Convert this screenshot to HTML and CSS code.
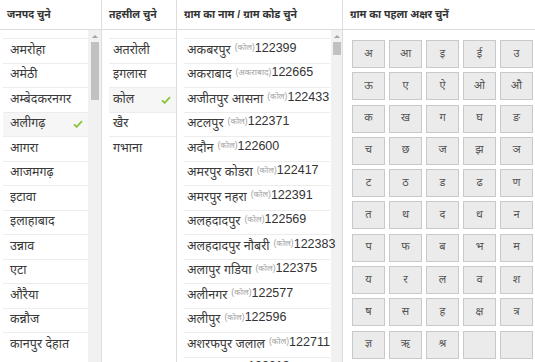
FILE: index.html
```html
<!DOCTYPE html>
<html lang="hi">
<head>
<meta charset="utf-8">
<title>ग्राम चयन</title>
<link rel="stylesheet" href="styles.css">
</head>
<body>
<div class="app">
  <section class="col col-district">
    <div class="hd">जनपद चुने</div>
    <div class="bd">
      <ul class="list">
        <li>अमरोहा</li>
        <li>अमेठी</li>
        <li>अम्बेदकरनगर</li>
        <li class="sel">अलीगढ़<svg class="chk" viewBox="0 0 12 10"><path d="M1 5.5 L4.3 8.5 L11 1.5" /></svg></li>
        <li>आगरा</li>
        <li>आजमगढ़</li>
        <li>इटावा</li>
        <li>इलाहाबाद</li>
        <li>उन्नाव</li>
        <li>एटा</li>
        <li>औरैया</li>
        <li>कन्नौज</li>
        <li>कानपुर देहात</li>
      </ul>
      <div class="sbar"><div class="arr"></div><div class="thumb thumb-long"></div></div>
    </div>
  </section>
  <section class="col col-tehsil">
    <div class="hd">तहसील चुने</div>
    <div class="bd">
      <ul class="list">
        <li>अतरोली</li>
        <li>इगलास</li>
        <li class="sel">कोल<svg class="chk" viewBox="0 0 12 10"><path d="M1 5.5 L4.3 8.5 L11 1.5" /></svg></li>
        <li>खैर</li>
        <li>गभाना</li>
      </ul>
    </div>
  </section>
  <section class="col col-village">
    <div class="hd">ग्राम का नाम / ग्राम कोड चुने</div>
    <div class="bd">
      <ul class="list">
        <li>अकबरपुर <small>(कोल)</small><span class="code">122399</span></li>
        <li>अकराबाद <small>(अकराबाद)</small><span class="code">122665</span></li>
        <li>अजीतपुर आसना <small>(कोल)</small><span class="code">122433</span></li>
        <li>अटलपुर <small>(कोल)</small><span class="code">122371</span></li>
        <li>अदौन <small>(कोल)</small><span class="code">122600</span></li>
        <li>अमरपुर कोडरा <small>(कोल)</small><span class="code">122417</span></li>
        <li>अमरपुर नहरा <small>(कोल)</small><span class="code">122391</span></li>
        <li>अलहदादपुर <small>(कोल)</small><span class="code">122569</span></li>
        <li>अलहदादपुर नौबरी <small>(कोल)</small><span class="code">122383</span></li>
        <li>अलापुर गडिया <small>(कोल)</small><span class="code">122375</span></li>
        <li>अलीनगर <small>(कोल)</small><span class="code">122577</span></li>
        <li>अलीपुर <small>(कोल)</small><span class="code">122596</span></li>
        <li>अशरफपुर जलाल <small>(कोल)</small><span class="code">122711</span></li>
        <li>असदपुर <small>(कोल)</small><span class="code">122613</span></li>
      </ul>
      <div class="sbar"><div class="arr"></div><div class="thumb thumb-short"></div></div>
    </div>
  </section>
  <section class="col col-letters">
    <div class="hd">ग्राम का पहला अक्षर चुनें</div>
    <div class="grid">
      <button>अ</button><button>आ</button><button>इ</button><button>ई</button><button>उ</button>
      <button>ऊ</button><button>ए</button><button>ऐ</button><button>ओ</button><button>औ</button>
      <button>क</button><button>ख</button><button>ग</button><button>घ</button><button>ङ</button>
      <button>च</button><button>छ</button><button>ज</button><button>झ</button><button>ञ</button>
      <button>ट</button><button>ठ</button><button>ड</button><button>ढ</button><button>ण</button>
      <button>त</button><button>थ</button><button>द</button><button>ध</button><button>न</button>
      <button>प</button><button>फ</button><button>ब</button><button>भ</button><button>म</button>
      <button>य</button><button>र</button><button>ल</button><button>व</button><button>श</button>
      <button>ष</button><button>स</button><button>ह</button><button>क्ष</button><button>त्र</button>
      <button>ज्ञ</button><button>ऋ</button><button>श्र</button><button></button><button></button>
    </div>
  </section>
</div>
</body>
</html>
```
FILE: styles.css
```css
html, body {
  margin: 0;
  padding: 0;
  background: #fff;
}
body {
  width: 535px;
  height: 362px;
  overflow: hidden;
  font-family: "Liberation Sans", "Noto Sans Devanagari", "Lohit Devanagari", "Mangal", "Noto Sans", sans-serif;
  color: #333;
}
.app {
  display: grid;
  grid-template-columns: 102px 75px 166px 192px;
  height: 362px;
}
.col {
  display: flex;
  flex-direction: column;
  min-width: 0;
  overflow: hidden;
  border-right: 1px solid #dedede;
}
.col-letters {
  border-right: 0;
}
.hd {
  height: 29px;
  flex: none;
  border-bottom: 1px solid #dcdcdc;
  display: flex;
  align-items: center;
  padding-left: 7px;
  font-size: 10.5px;
  font-weight: bold;
  color: #333;
  white-space: nowrap;
  background: #fff;
}
.bd {
  flex: 1;
  display: flex;
  min-height: 0;
}
.list {
  list-style: none;
  margin: 0;
  padding: 8px 0 0 0;
  flex: 1;
  min-width: 0;
}
.list li {
  height: 23.5px;
  border-top: 1px solid #ececec;
  display: flex;
  align-items: center;
  padding-left: 6px;
  font-size: 12.5px;
  white-space: nowrap;
  color: #3a3a3a;
}
.list li.sel {
  background: #f6f6f6;
}
.chk {
  width: 10px;
  height: 8px;
  margin-left: auto;
  margin-right: 5px;
  fill: none;
  stroke: #8cc63e;
  stroke-width: 2.4;
}
.col-district .list {
  margin-left: 3px;
}
.col-district .list li {
  padding-left: 7px;
}
.col-tehsil .list {
  margin-left: 7px;
}
.col-tehsil .list li {
  padding-left: 4px;
}
.col-village .list {
  margin-left: 7px;
}
.col-village .list li {
  padding-left: 3px;
}
.list small {
  font-size: 8.5px;
  color: #a0a0a0;
  margin-left: 4px;
  position: relative;
  top: -3px;
}
.code {
  font-family: "Liberation Sans", sans-serif;
  font-size: 12.5px;
  color: #333;
  position: relative;
  top: -3px;
}
.sbar {
  flex: none;
  width: 13px;
  background: #f1f1f1;
  display: flex;
  flex-direction: column;
  align-items: center;
}
.col-village .sbar {
  width: 11px;
  margin-left: 1px;
}
.arr {
  margin-top: 5px;
  width: 0;
  height: 0;
  border-left: 3px solid transparent;
  border-right: 3px solid transparent;
  border-bottom: 3px solid #a3a3a3;
}
.thumb {
  margin-top: 4px;
  width: 8px;
  background: #c1c1c1;
}
.thumb-long {
  height: 58px;
}
.thumb-short {
  height: 13px;
}
.grid {
  display: grid;
  grid-template-columns: repeat(5, 33px);
  grid-auto-rows: 28px;
  column-gap: 4px;
  row-gap: 4.3px;
  padding: 10px 0 0 9px;
}
.grid button {
  margin: 0;
  padding: 0;
  border: 1px solid #c9c9c9;
  background: #ebebeb;
  color: #555;
  font-family: "Noto Sans Devanagari", "Lohit Devanagari", "Mangal", sans-serif;
  font-size: 11px;
  line-height: 1;
  border-radius: 0;
}
```
